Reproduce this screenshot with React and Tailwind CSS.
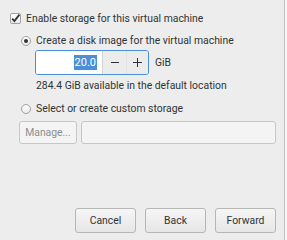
export default function App() {
  const font = { fontFamily: "Roboto, 'Liberation Sans', sans-serif" };
  return (
    <div className="w-[287px] h-[240px] flex bg-[#ededed] text-[#2e3436] text-[10.4px] leading-[12px]" style={font}>
      <div className="flex-1 flex flex-col border-r border-[#c2c2c2]">
        <div className="flex items-center h-[11px] mt-[13px] pl-[10px] gap-[5px]">
          <div className="w-[11px] h-[11px] rounded-[2px] border border-[#a1a1a1] bg-gradient-to-b from-white to-[#ebebeb] flex items-center justify-center">
            <svg width="9" height="9" viewBox="0 0 9 9" className="overflow-visible">
              <path d="M1.2 4.6 L3.4 7 L8.4 0.6" fill="none" stroke="#2e3436" strokeWidth="1.8" />
            </svg>
          </div>
          <span>Enable storage for this virtual machine</span>
        </div>
        <div className="flex items-center h-[10px] mt-[12px] pl-[21px] gap-[5px]">
          <div className="w-[10px] h-[10px] rounded-full border border-[#a1a1a1] bg-gradient-to-b from-white to-[#ebebeb] flex items-center justify-center">
            <div className="w-[4px] h-[4px] rounded-full bg-[#2e3436]" />
          </div>
          <span>Create a disk image for the virtual machine</span>
        </div>
        <div className="flex items-center mt-[4px] pl-[35px] gap-[6px]">
          <div className="flex h-[25px] w-[114px] rounded-[3px] border border-[#4a90d9] overflow-hidden">
            <div className="w-[66px] bg-white flex items-center justify-end pr-[5px]">
              <span className="bg-[#4a90d9] text-white px-[1px] leading-[15px] h-[15px] text-[11px]">20.0</span>
            </div>
            <div className="w-[24px] bg-[#ececec] border-l border-[#d5d5d5] flex items-center justify-center">
              <div className="w-[8px] h-[1.5px] bg-[#2e3436]" />
            </div>
            <div className="flex-1 bg-[#ececec] border-l border-[#e2e2e2] flex items-center justify-center relative">
              <div className="w-[9px] h-[1.5px] bg-[#2e3436]" />
              <div className="absolute w-[1.5px] h-[9px] bg-[#2e3436]" />
            </div>
          </div>
          <span>GiB</span>
        </div>
        <div className="mt-[5px] pl-[36px]">284.4 GiB available in the default location</div>
        <div className="flex items-center h-[10px] mt-[12px] pl-[21px] gap-[5px]">
          <div className="w-[10px] h-[10px] rounded-full border border-[#a1a1a1] bg-gradient-to-b from-white to-[#ebebeb]" />
          <span>Select or create custom storage</span>
        </div>
        <div className="flex mt-[7px] pl-[19px] pr-[8px] gap-[4px] h-[23px]">
          <div className="w-[58px] rounded-[3px] border border-[#c7c7c5] bg-[#f4f4f4] text-[#8b8e8f] flex items-center justify-center">Manage...</div>
          <div className="flex-1 rounded-[3px] border border-[#c7c7c5] bg-[#f4f4f4]" />
        </div>
        <div className="mt-auto mb-[7px] flex justify-end pr-[8px] gap-[9px]">
          {["Cancel", "Back", "Forward"].map((t) => (
            <div key={t} className="w-[61px] h-[25px] rounded-[3px] border border-[#b6b6b3] bg-gradient-to-b from-[#f6f6f6] to-[#e6e6e6] flex items-center justify-center">{t}</div>
          ))}
        </div>
      </div>
      <div className="w-[2px] bg-[#f7f7f7]" />
    </div>
  );
}
